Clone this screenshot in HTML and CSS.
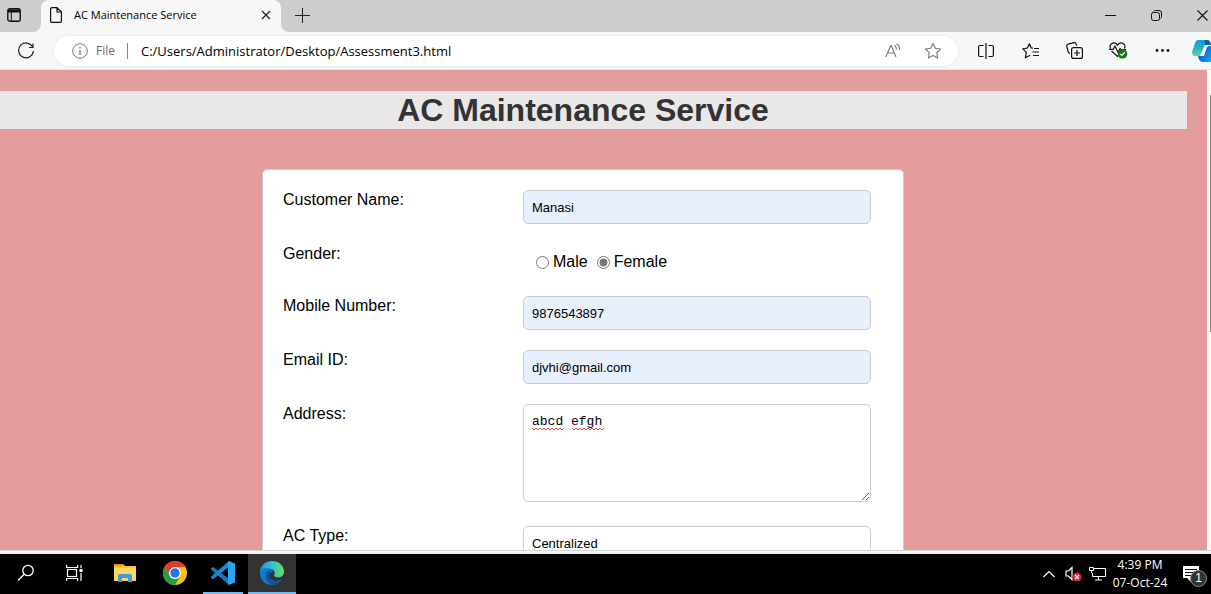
FILE: index.html
```html
<!DOCTYPE html>
<html lang="en">
<head>
<meta charset="utf-8">
<title>AC Maintenance Service</title>
<link rel="stylesheet" href="styles.css">
</head>
<body>
<header class="browser">
  <div class="tabstrip">
    <button class="tab-menu" aria-label="Tab actions">
      <svg width="14" height="14" viewBox="0 0 14 14" fill="none" stroke="#111" stroke-width="1.4"><rect x=".8" y=".8" width="12.4" height="12.4" rx="2"/><path d="M1 3h12" stroke-width="3"/><path d="M4.3 4v9" stroke-width="1"/></svg>
    </button>
    <div class="tab">
      <svg width="12" height="16" viewBox="0 0 12 16" fill="none" stroke="#111" stroke-width="1.2"><path d="M2.2.6H7L11.4 5v9q0 1.4-1.4 1.4H2Q.6 15.4.6 14V2Q.6.6 2.2.6ZM7 .8V5h4.2"/></svg>
      <span class="tab-title">AC Maintenance Service</span>
      <button class="tab-close" aria-label="Close tab"><svg width="10" height="10" viewBox="0 0 10 10" stroke="#222" stroke-width="1.3"><path d="M1 1l8 8M9 1L1 9"/></svg></button>
    </div>
    <button class="new-tab" aria-label="New tab"><svg width="15" height="15" viewBox="0 0 15 15" stroke="#222"><path d="M0 7.5h15M7.5 0v15"/></svg></button>
    <div class="window-buttons">
      <button aria-label="Minimize"><svg width="11" height="11" viewBox="0 0 11 11" stroke="#111"><path d="M0 5.5h11"/></svg></button>
      <button aria-label="Restore"><svg width="11" height="11" viewBox="0 0 11 11" fill="none" stroke="#111"><rect x=".5" y="2.500" width="8" height="8" rx="2"/><path d="M2.5 1.500Q3 .5 4.500.5H8Q10.500.5 10.500 3v3.500q0 1.500-1 2"/></svg></button>
      <button class="window-close" aria-label="Close"><svg width="11" height="11" viewBox="0 0 11 11" stroke="#111" stroke-width="1.100"><path d="M.5.5l10 10M10.500.5l-10 10"/></svg></button>
    </div>
  </div>
  <div class="toolbar">
    <button class="reload" aria-label="Reload"><svg width="18" height="18" viewBox="0 0 18 18" fill="none" stroke="#222" stroke-width="1.2"><path d="M15.5 4.800A7.400 7.400 0 1 0 16.400 9M16 1.500V5.500H12"/></svg></button>
    <div class="address">
      <svg width="16" height="16" viewBox="0 0 16 16" fill="none" stroke="#777"><circle cx="8" cy="8" r="7.3"/><path d="M8 7v5M8 4v1.500" stroke-width="1.400"/></svg>
      <span class="scheme">File</span>
      <input class="url" type="text" aria-label="Address" value="C:/Users/Administrator/Desktop/Assessment3.html">
      <button aria-label="Read aloud"><svg width="16" height="16" viewBox="0 0 16 16" fill="none" stroke="#777" stroke-width="1.100"><path d="M.8 14L5.800 2.500h.4L11 14M2.600 10h6.700M9.500 2.500q2.200 1.500 2 4M11.500.8q3.500 2.300 3 6.200"/></svg></button>
      <button aria-label="Add to favorites"><svg width="18" height="18" viewBox="0 0 18 18" fill="none" stroke="#777" stroke-width="1.100" stroke-linejoin="round"><path d="M9 1.400l2.300 4.900 5.300.7-3.900 3.700 1 5.300L9 13.400 4.300 16l1-5.300L1.400 7l5.300-.7Z"/></svg></button>
    </div>
    <div class="tools">
      <button aria-label="Split screen"><svg width="16" height="16" viewBox="0 0 16 16" fill="none" stroke="#111" stroke-width="1.200"><path d="M5.500 2.500H2Q.6 2.500.6 4v8q0 1.500 1.400 1.500h3.500M10.500 2.500H14q1.400 0 1.400 1.500v8q0 1.500-1.400 1.500h-3.500M8 0v16"/></svg></button>
      <button aria-label="Favorites"><svg width="17" height="16" viewBox="0 0 17 16" fill="none" stroke="#111" stroke-width="1.200" stroke-linejoin="round"><path d="M11 5.200L9.200 5 7.400.8 5.400 5 .8 5.800l3.500 3.500-.9 5.500 4.800-2.600M12 5.500h5M10.500 9H17M11 12.500h6"/></svg></button>
      <button aria-label="Collections"><svg width="17" height="17" viewBox="0 0 17 17" fill="none" stroke="#111" stroke-width="1.200"><rect x="5.600" y="5.600" width="10.800" height="10.800" rx="2"/><path d="M11 8v6M8 11h6M4 11.500Q2.700 11.300 2.300 10L.8 4.500Q.4 2.700 2 2.200L8 .7q1.700-.3 2.200 1.400l.5 1.500"/></svg></button>
      <button aria-label="Browser essentials"><svg width="19" height="17" viewBox="0 0 19 17" fill="none" stroke="#111" stroke-width="1.200"><path d="M1.500 6.500Q.2 3.500 2.500 1.700 5.800-.3 8.500 3q2.700-3.300 6-1.300Q16.800 3.500 15.500 6.500M2.500 9l6 5.500 2-2M0 7.300h4.200l1.800-3 3 6L11 6.500l1 1h5"/><circle cx="13.500" cy="11.800" r="4.800" fill="#107c10" stroke="none"/><path d="M11.300 11.800l1.600 1.600 3-3.200" stroke="#fff"/></svg></button>
      <button aria-label="More"><svg width="15" height="5" viewBox="0 0 15 5" fill="#111"><circle cx="2" cy="2.500" r="1.400"/><circle cx="7.500" cy="2.500" r="1.400"/><circle cx="13" cy="2.500" r="1.400"/></svg></button>
    </div>
    <button class="copilot" aria-label="Copilot">
      <svg width="24" height="24" viewBox="0 0 24 24"><defs><linearGradient id="cp1" x2="0" y2="1"><stop stop-color="#08a0e0"/><stop offset=".5" stop-color="#22b3c4"/><stop offset="1" stop-color="#66d58e"/></linearGradient><linearGradient id="cp2" x2="1" y2=".6"><stop stop-color="#1234c6"/><stop offset="1" stop-color="#10b3f3"/></linearGradient></defs><path d="M6 1h10q2 0 3 5h-6L8 17H3Q0 17 0 13L3 4Q4 1 6 1Z" fill="url(#cp1)"/><path d="M13 1h3q2 1 3 5h-6Q12 3 13 1Z" fill="#145a9c"/><path d="M6 17h5l4-10h5q4 0 4 5l-2 7q-1 4-5 4h-6q-4 0-5-6Z" fill="url(#cp2)"/><path d="M14 6h4q-3 1-4 5l-2 6H8q2-1 3-4 1-6 3-7Z" fill="#fff"/></svg>
    </button>
  </div>
</header>

<main class="viewport">
  <div class="page">
    <h1>AC Maintenance Service</h1>
    <form class="card">
      <div class="row"><label for="name">Customer Name:</label><input class="field filled" id="name" type="text" value="Manasi"></div>
      <div class="row" role="radiogroup" aria-labelledby="gender"><span id="gender">Gender:</span>
        <div class="radios"><input type="radio" name="gender" id="male"><label for="male">Male</label><input type="radio" name="gender" id="female" checked><label for="female">Female</label></div>
      </div>
      <div class="row"><label for="mobile">Mobile Number:</label><input class="field filled" id="mobile" type="text" value="9876543897"></div>
      <div class="row"><label for="email">Email ID:</label><input class="field filled" id="email" type="email" value="djvhi@gmail.com"></div>
      <div class="row address-row"><label for="addr">Address:</label>
        <div class="text-wrap"><textarea class="field" id="addr" spellcheck="false">abcd efgh</textarea>
          <svg class="spelling" width="73" height="4" viewBox="0 0 73 4" fill="none" stroke="#f04040"><path d="M0 1l2 2 2-2 2 2 2-2 2 2 2-2 2 2 2-2 2 2 2-2 2 2 2-2 2 2 2-2 2 2 2-2M40 1l2 2 2-2 2 2 2-2 2 2 2-2 2 2 2-2 2 2 2-2 2 2 2-2 2 2 2-2 2 2 2-2"/></svg>
        </div>
      </div>
      <div class="row"><label for="type">AC Type:</label><select class="field" id="type"><option>Centralized</option></select></div>
    </form>
  </div>
  <div class="scrollbar"><div class="thumb"></div></div>
</main>

<footer class="taskbar">
  <nav class="apps" aria-label="Apps">
    <button aria-label="Search"><svg width="18" height="18" viewBox="0 0 18 18" fill="none" stroke="#fff" stroke-width="1.300"><circle cx="11" cy="6.500" r="5.200"/><path d="M7.200 10.200L1 16.500"/></svg></button>
    <button aria-label="Task view"><svg width="17" height="16" viewBox="0 0 17 16" fill="none" stroke="#fff" stroke-width="1.200"><rect x="1.500" y="4.500" width="9" height="7"/><path d="M.6 0v2.500h11V0M.6 16v-2.500h11V16M15 0v3M15 8v8"/><path d="M13.500 5.500h3" stroke-width="3"/></svg></button>
    <button class="explorer" aria-label="File Explorer"><svg width="22" height="20" viewBox="0 0 22 20"><path d="M0 1h9l2 2h11v15H0Z" fill="#ffd561"/><path d="M0 1h9v2H0Z" fill="#e69b00"/><path d="M0 3h22v2H0Z" fill="#f5c542"/><path d="M4 19v-6q0-2 2-2h10q2 0 2 2v6h-4v-4H8v4Z" fill="#3f9bdc"/></svg></button>
    <button aria-label="Chrome"><svg width="24" height="24" viewBox="0 0 24 24"><circle cx="12" cy="12" r="12" fill="#fbc116"/><path d="M1.600 6A12 12 0 0 1 22.400 6H12L6.800 15Z" fill="#e33b2e"/><path d="M1.600 6A12 12 0 0 0 12 24l5.200-9-5.200 3-5.200-3Z" fill="#249b48"/><circle cx="12" cy="12" r="6" fill="#fff"/><circle cx="12" cy="12" r="4.700" fill="#2374e1"/></svg></button>
    <button class="open code" aria-label="Visual Studio Code"><svg width="24" height="24" viewBox="0 0 24 24"><path d="M0 7.500l2-1.800L18 18v6L0 8.500Z" fill="#1279be"/><path d="M0 16.500l2 1.800L18 6V0L0 15.500Z" fill="#1688cf"/><path d="M18 0l6 2.500v19L18 24l-1-1V1Z" fill="#2ba5ef"/></svg></button>
    <button class="open active" aria-label="Microsoft Edge"><svg width="24" height="24" viewBox="0 0 24 24"><defs><linearGradient id="ed" x2="1"><stop stop-color="#2094d8"/><stop offset=".5" stop-color="#32bed8"/><stop offset="1" stop-color="#67e353"/></linearGradient></defs><path d="M0 10C1 4 6 0 12 0c7 0 12 5 12 10.500 0 4-3 6-6.500 6-3 0-4.500-1.300-3.500-2.700 2-3-1-6-4.500-6C5 7.800 1 9 0 12Z" fill="url(#ed)"/><path d="M0 12C0 8 4 6.500 8 7.500c3 .5 5 2 5 4-2-.5-4.500 1-4.500 3.500 0 4 7 7 13 3.200C19 22 16 24 12 24 5 24 0 19 0 12Z" fill="#0b7cd0"/><path d="M8 9.500C4 13 5 21 12 24c4 0 8-2 9.500-5.500-6 3.500-13 .5-13-3.700 0-2 2-3.500 3.500-3.800Q11 9 8 9.500Z" fill="#10559f"/><path d="M13 11.500q1.500 1.500 1 3 1 2.500 5 2-5 2-8-.5-2-2.500 2-4.500Z" fill="#333"/></svg></button>
  </nav>
  <div class="tray">
    <button aria-label="Show hidden icons"><svg width="12" height="8" viewBox="0 0 12 8" fill="none" stroke="#fff" stroke-width="1.200"><path d="M.5 7L6 1.500 11.500 7"/></svg></button>
    <button aria-label="Volume"><svg width="17" height="16" viewBox="0 0 17 16" fill="none" stroke="#fff" stroke-width="1.200"><path d="M3.500 5H1v5h2.500L7 13.500v-12L3.500 5"/><circle cx="12" cy="11" r="4.600" fill="#d91f32" stroke="none"/><path d="M10 9l4 4M14 9l-4 4"/></svg></button>
    <button aria-label="Network"><svg width="17" height="14" viewBox="0 0 17 14" fill="none" stroke="#fff"><path d="M5 1.500h11.500v8H3.500V6M9.500 10v3M6 13h7"/><path d="M.5.5h4v3h-4ZM2.500 3.500V6"/></svg></button>
    <time class="clock"><span>4:39 PM</span><span>07-Oct-24</span></time>
    <button class="notify" aria-label="1 notification"><svg width="16" height="16" viewBox="0 0 16 16"><path d="M0 0h16v12h-8v4l-4-4H0Z" fill="#fff"/><path d="M2 3.500h12M2 6.500h12M2 9.500h7" stroke="#111"/></svg><span class="badge">1</span></button>
  </div>
</footer>
</body>
</html>
```
FILE: styles.css
```css
* { box-sizing: border-box; }
body {
  margin: 0;
  height: 100vh;
  display: flex;
  flex-direction: column;
  overflow: hidden;
  font-family: "Liberation Sans", Arial, sans-serif;
  font-size: 16px;
  color: #000;
}
button {
  display: flex;
  align-items: center;
  justify-content: center;
  flex: none;
  padding: 0;
  border: 0;
  background: none;
}
svg { display: block; flex: none; }

/* Browser chrome */
.browser { flex: none; font-family: "Open Sans", "Noto Sans", sans-serif; }
.tabstrip { display: flex; height: 32px; background: linear-gradient(#cdcdcd 20px, #f7f7f7 20px); }
.tab-menu { width: 41px; padding: 0 13px 2px 0; background: #cdcdcd; border-radius: 0 0 8px 0; }
.tab {
  display: flex;
  align-items: center;
  width: 240px;
  padding: 0 10px 2px 9px;
  background: #f7f7f7;
  border-radius: 8px 8px 0 0;
}
.tab-title { flex: 1; margin-left: 12px; font-size: 11px; line-height: 14px; white-space: nowrap; }
.new-tab { width: 43px; padding-bottom: 2px; background: #cdcdcd; border-radius: 0 0 0 8px; }
.window-buttons { display: flex; flex: 1; justify-content: flex-end; padding-bottom: 2px; background: #cdcdcd; }
.window-buttons button { width: 46px; }
.window-buttons .window-close { width: 32px; padding-left: 14px; }
.toolbar {
  display: flex;
  align-items: center;
  height: 38px;
  background: #f7f7f7;
  border-bottom: 1px solid #e5e5e5;
  overflow: hidden;
}
.reload { width: 54px; padding-right: 2px; }
.address {
  display: flex;
  align-items: center;
  flex: 1;
  height: 30px;
  padding: 0 16px 0 18px;
  border-radius: 15px;
  background: #fff;
  box-shadow: 0 0 3px #e2e2e2;
}
.scheme {
  margin-left: 8px;
  padding-right: 12px;
  border-right: 1px solid #888;
  font-size: 12px;
  line-height: 16px;
  color: #6b6b6b;
}
.url {
  flex: 1;
  min-width: 0;
  padding: 0 0 0 13px;
  border: 0;
  outline: 0;
  background: none;
  color: #000;
  font: 13px "Open Sans", "Noto Sans", sans-serif;
}
.address button { margin-left: 23px; }
.tools { display: flex; margin: 0 8px 0 6px; }
.tools button { width: 44px; height: 30px; }
.copilot { width: 19px; justify-content: flex-start; overflow: hidden; }

/* Web page */
.viewport {
  flex: 1;
  min-height: 0;
  display: flex;
  border-bottom: 1px solid #d5d5d5;
  overflow: hidden;
  background: #e39b9b;
}
.page { flex: 1; padding: 21px 20px 0 0; }
h1 {
  margin: 0 0 40px;
  padding-right: 21px;
  background: #e9e7e8;
  color: #333;
  font-size: 32px;
  line-height: 38px;
  text-align: center;
}
.card {
  width: 642px;
  margin-left: calc((100% - 663px) / 2);
  padding: 20px;
  border: 1px solid #ccc;
  border-radius: 5px;
  background: #fff;
}
.row {
  display: grid;
  grid-template-columns: 240px 348px;
  align-items: start;
  margin-bottom: 20px;
  line-height: 20px;
}
.field {
  display: block;
  width: 100%;
  height: 34px;
  padding: 8px;
  border: 1px solid #ccc;
  border-radius: 5px;
  background: #fff;
  color: #000;
  font: 13px "Liberation Sans", Arial, sans-serif;
}
select.field { appearance: none; }
.filled { background: #e8f0fe; }
.radios { display: flex; align-items: center; height: 32px; padding: 4px 0 0 13px; }
.radios input { width: 13px; height: 13px; margin: 0 4px 0 0; accent-color: #767676; }
.radios label { margin-right: 9px; }
.text-wrap { position: relative; }
textarea.field { height: 98px; padding-top: 9px; font: 13px "Liberation Mono", "Courier New", monospace; }
.spelling { position: absolute; left: 9px; top: 23px; }
.address-row { margin-bottom: 24px; }
.scrollbar { width: 4px; padding: 25px 0 0 3px; background: #fcfcfc; }
.thumb { height: 237px; background: #888; }

/* Desktop taskbar */
.taskbar {
  flex: none;
  display: flex;
  justify-content: space-between;
  height: 43px;
  border-top: 3px solid #f5f5f5;
  background: #000;
  color: #fff;
  font-family: "Open Sans", "Noto Sans", sans-serif;
}
.apps, .tray { display: flex; }
.apps button { width: 48px; border-bottom: 2px solid transparent; }
.apps button:first-child { margin-left: 2px; }
.apps .explorer { margin: 0 2px 0 3px; }
.apps .open { border-bottom-color: #76b9ed; }
.apps .code { width: 40px; margin: 0 5px 0 4px; }
.apps .active { background: #333; }
.tray { align-items: center; }
.tray button { width: 24px; }
.clock {
  display: flex;
  flex-direction: column;
  align-items: center;
  width: 62px;
  font-size: 12px;
  line-height: 18px;
  white-space: nowrap;
}
.tray .notify { position: relative; width: 40px; }
.badge {
  position: absolute;
  left: 19px;
  top: 4px;
  width: 17px;
  height: 17px;
  border: 1px solid #888;
  border-radius: 50%;
  background: #333;
  color: #fff;
  font-size: 12px;
  line-height: 15px;
}
```
